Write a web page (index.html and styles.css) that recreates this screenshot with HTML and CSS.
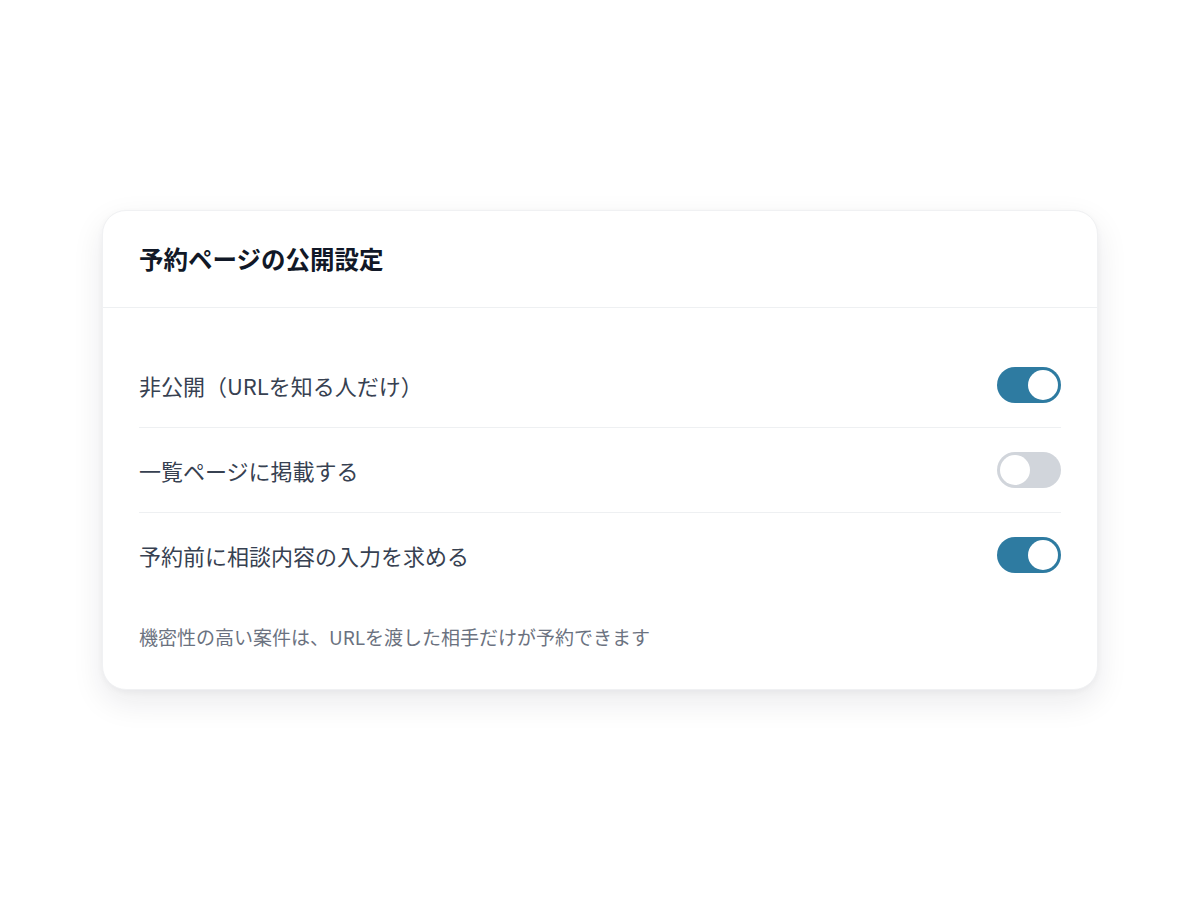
FILE: index.html
```html
<!DOCTYPE html>
<html lang="ja">
<head>
<meta charset="utf-8">
<link rel="stylesheet" href="styles.css">
</head>
<body>
<div class="card">
  <div class="card-header">
    <h2 class="title">予約ページの公開設定</h2>
  </div>
  <div class="card-body">
    <div class="row">
      <span class="label">非公開（URLを知る人だけ）</span>
      <span class="toggle on"><span class="knob"></span></span>
    </div>
    <div class="row">
      <span class="label">一覧ページに掲載する</span>
      <span class="toggle"><span class="knob"></span></span>
    </div>
    <div class="row last">
      <span class="label">予約前に相談内容の入力を求める</span>
      <span class="toggle on"><span class="knob"></span></span>
    </div>
    <p class="note">機密性の高い案件は、URLを渡した相手だけが予約できます</p>
  </div>
</div>
</body>
</html>
```
FILE: styles.css
```css
html, body {
  margin: 0;
  padding: 0;
  background: #ffffff;
}
body {
  width: 1200px;
  height: 900px;
  display: flex;
  align-items: center;
  justify-content: center;
  font-family: "Noto Sans CJK JP", "Noto Sans", sans-serif;
}
.card {
  width: 996px;
  box-sizing: border-box;
  background: #fff;
  border: 1px solid #f0f1f3;
  border-radius: 24px;
  box-shadow: 0 12px 32px rgba(17, 24, 39, 0.09), 0 2px 6px rgba(17, 24, 39, 0.04);
}
.card-header {
  padding: 36px 36px;
  border-bottom: 1px solid #eef0f2;
}
.title {
  margin: 0;
  font-size: 24.5px;
  line-height: 24px;
  font-weight: 700;
  color: #111827;
}
.card-body {
  padding: 35px 36px 36px;
}
.row {
  display: flex;
  align-items: center;
  justify-content: space-between;
  padding: 24px 0;
  border-bottom: 1px solid #eef0f2;
}
.row.last {
  border-bottom: none;
}
.label {
  font-size: 22px;
  color: #374151;
}
.toggle {
  position: relative;
  width: 64px;
  height: 36px;
  border-radius: 18px;
  background: #d1d5db;
  flex-shrink: 0;
}
.toggle.on {
  background: #2e7ba1;
}
.knob {
  position: absolute;
  top: 3px;
  left: 3px;
  width: 30px;
  height: 30px;
  border-radius: 50%;
  background: #fff;
}
.toggle.on .knob {
  left: 31px;
}
.note {
  margin: 24px 0 0;
  font-size: 19px;
  line-height: 32px;
  color: #6b7280;
}
```
